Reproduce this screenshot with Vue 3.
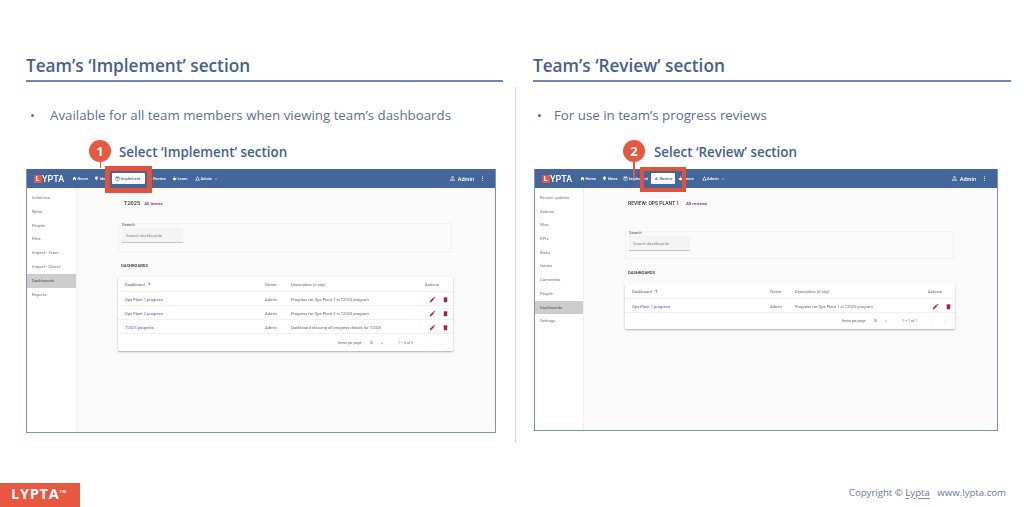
<script setup>
const icons = {
  home: 'M10 20v-6h4v6h5v-8h3L12 3 2 12h3v8z',
  idea: 'M9 21c0 .55.45 1 1 1h4c.55 0 1-.45 1-1v-1H9v1zm3-19C8.14 2 5 5.14 5 9c0 2.38 1.19 4.47 3 5.74V17c0 .55.45 1 1 1h6c.55 0 1-.45 1-1v-2.26c1.81-1.27 3-3.36 3-5.74 0-3.86-3.14-7-7-7z',
  event: 'M17 10H7v2h10v-2zm2-7h-1V1h-2v2H8V1H6v2H5c-1.11 0-1.99.9-1.99 2L3 19c0 1.1.89 2 2 2h14c1.1 0 2-.9 2-2V5c0-1.1-.9-2-2-2zm0 16H5V8h14v11zm-5-5H7v2h7v-2z',
  chart: 'M5 9.2h3V19H5zM10.6 5h2.8v14h-2.8zm5.6 8H19v6h-2.8z',
  learn: 'M12 2a3 3 0 1 1 0 6 3 3 0 0 1 0-6zM3 10h18c0 7-4 12-9 12S3 17 3 10z',
  team: 'M12 2a3.5 3.5 0 1 1 0 7 3.5 3.5 0 0 1 0-7zM6.5 11a3 3 0 1 1 0 6 3 3 0 0 1 0-6zM17.5 11a3 3 0 1 1 0 6 3 3 0 0 1 0-6zM1 22c0-2.5 2.5-4 5.5-4s5.5 1.5 5.5 4zM12 22c0-2.5 2.5-4 5.5-4s5.5 1.5 5.5 4z',
  admin: 'M12 5.9c1.16 0 2.1.94 2.1 2.1s-.94 2.1-2.1 2.1S9.9 9.16 9.9 8s.94-2.1 2.1-2.1m0 9c2.97 0 6.1 1.46 6.1 2.1v1.1H5.9V17c0-.64 3.13-2.1 6.1-2.1M12 4C9.79 4 8 5.79 8 8s1.79 4 4 4 4-1.79 4-4-1.79-4-4-4zm0 9c-2.67 0-8 1.34-8 4v3h16v-3c0-2.66-5.33-4-8-4z',
  more: 'M12 8c1.1 0 2-.9 2-2s-.9-2-2-2-2 .9-2 2 .9 2 2 2zm0 2c-1.1 0-2 .9-2 2s.9 2 2 2 2-.9 2-2-.9-2-2-2zm0 6c-1.1 0-2 .9-2 2s.9 2 2 2 2-.9 2-2-.9-2-2-2z',
  edit: 'M3 17.25V21h3.75L17.81 9.94l-3.75-3.75L3 17.25zM20.71 7.04c.39-.39.39-1.02 0-1.41l-2.34-2.34c-.39-.39-1.02-.39-1.41 0l-1.83 1.83 3.75 3.75 1.83-1.83z',
  del: 'M6 19c0 1.1.9 2 2 2h8c1.1 0 2-.9 2-2V7H6v12zM19 4h-3.5l-1-1h-5l-1 1H5v2h14V4z',
  up: 'M4 12l1.41 1.41L11 7.83V20h2V7.83l5.58 5.59L20 12l-8-8-8 8z'
}

const navItems = [
  { label: 'Home', icon: 'home' },
  { label: 'Ideas', icon: 'idea' },
  { label: 'Implement', icon: 'event' },
  { label: 'Review', icon: 'chart' },
  { label: 'Learn', icon: 'learn' },
  { label: 'Admin', icon: 'team', caret: true }
]

const sections = [
  {
    key: 'implement',
    title: 'Team’s ‘Implement’ section',
    bullet: 'Available for all team members when viewing team’s dashboards',
    step: '1',
    select: 'Select ‘Implement’ section',
    active: 'Implement',
    side: ['Initiatives', 'News', 'People', 'Files', 'Impact - Team', 'Impact - Charts', 'Dashboards', 'Reports'],
    heading: 'T2025',
    back: 'All teams',
    rows: [
      ['Ops Plant 1 progress', 'Admin', 'Progress for Ops Plant 1 in T2025 program'],
      ['Ops Plant 2 progress', 'Admin', 'Progress for Ops Plant 2 in T2025 program'],
      ['T2025 progress', 'Admin', 'Dashboard showing all progress details for T2025']
    ],
    range: '1 – 3 of 3'
  },
  {
    key: 'review',
    title: 'Team’s ‘Review’ section',
    bullet: 'For use in team’s progress reviews',
    step: '2',
    select: 'Select ‘Review’ section',
    active: 'Review',
    side: ['Review updates', 'Actions', 'Files', 'KPIs', 'Risks', 'Issues', 'Comments', 'People', 'Dashboards', 'Settings'],
    heading: 'REVIEW: OPS PLANT 1',
    back: 'All reviews',
    rows: [['Ops Plant 1 progress', 'Admin', 'Progress for Ops Plant 1 in T2025 program']],
    range: '1 – 1 of 1'
  }
]
</script>

<template>
  <div class="slide">
    <main class="columns">
      <template v-for="(s, i) in sections" :key="s.key">
        <div v-if="i === 1" class="divider"></div>
        <section class="col" :class="s.key">
          <h2 class="title">{{ s.title }}</h2>
          <ul class="bullets"><li>{{ s.bullet }}</li></ul>
          <h3 class="select">{{ s.select }}</h3>

          <div class="mock">
            <header class="bar">
              <div class="logo"><span class="logo-l">L</span>YPTA</div>
              <nav class="nav">
                <span v-for="n in navItems" :key="n.label" class="nav-item" :class="{ on: n.label === s.active }">
                  <svg viewBox="0 0 24 24"><path :d="icons[n.icon]" /></svg>
                  {{ n.label }}
                  <i v-if="n.caret" class="caret"></i>
                </span>
              </nav>
              <div class="user">
                <svg viewBox="0 0 24 24"><path :d="icons.admin" /></svg>
                <span>Admin</span>
                <svg class="more" viewBox="0 0 24 24"><path :d="icons.more" /></svg>
              </div>
            </header>
            <div class="body">
              <aside class="side">
                <div v-for="t in s.side" :key="t" class="side-item" :class="{ on: t === 'Dashboards' }">{{ t }}</div>
              </aside>
              <div class="content">
                <div class="head"><b>{{ s.heading }}</b><a>{{ s.back }}</a></div>
                <div class="search">
                  <label>Search</label>
                  <div class="input">Search dashboards</div>
                </div>
                <div class="dash">DASHBOARDS</div>
                <div class="table">
                  <div class="row th">
                    <span class="c1">Dashboard <svg viewBox="0 0 24 24"><path :d="icons.up" /></svg></span>
                    <span class="c2">Owner</span>
                    <span class="c3">Description (if any)</span>
                    <span class="c4">Actions</span>
                  </div>
                  <div v-for="r in s.rows" :key="r[0]" class="row td">
                    <span class="c1 link">{{ r[0] }}</span>
                    <span class="c2">{{ r[1] }}</span>
                    <span class="c3">{{ r[2] }}</span>
                    <span class="c4 acts">
                      <svg viewBox="0 0 24 24"><path class="pink" :d="icons.edit" /></svg>
                      <svg viewBox="0 0 24 24"><path class="red" :d="icons.del" /></svg>
                    </span>
                  </div>
                  <div class="pager">
                    <span>Items per page:</span>
                    <span class="size">10</span>
                    <i class="pcaret"></i>
                    <span class="range">{{ s.range }}</span>
                    <span class="chev">‹</span>
                    <span class="chev">›</span>
                  </div>
                </div>
              </div>
            </div>
          </div>

          <div class="callout">
            <div class="badge">{{ s.step }}</div>
            <div class="stem"></div>
            <div class="box"></div>
          </div>
        </section>
      </template>
    </main>
    <footer class="foot">
      <div class="brand">LYPTA<sup>TM</sup></div>
      <div class="copy">Copyright © <u>Lypta</u> &nbsp; www.lypta.com</div>
    </footer>
  </div>
</template>

<style>
html, body { margin: 0; background: #fff; }
</style>

<style scoped>
.slide {
  width: 1024px;
  height: 507px;
  display: flex;
  flex-direction: column;
  overflow: hidden;
  background: #fff;
  font-family: "Open Sans", "Noto Sans", sans-serif;
}
.columns {
  flex: 1;
  display: grid;
  grid-template-columns: 477px 30px 478px;
  padding-left: 26px;
}
.divider {
  width: 1px;
  height: 356px;
  margin: 87px 0 0 -6px;
  background: #d9d9d9;
  justify-self: center;
}
.col { position: relative; padding-top: 54px; min-width: 0; }
.title {
  margin: 0;
  height: 26px;
  line-height: 24px;
  font-size: 17.2px;
  font-weight: 600;
  color: #44618f;
  border-bottom: 2px solid #7088ad;
  box-sizing: content-box;
}
.bullets {
  list-style: none;
  margin: 23px 0 0;
  padding: 0;
  height: 20px;
  line-height: 20px;
  font-size: 13.3px;
  color: #5a7096;
}
.bullets li { position: relative; padding-left: 24px; }
.bullets li::before {
  content: "";
  position: absolute;
  left: 5px;
  top: 9px;
  width: 3px;
  height: 3px;
  border-radius: 50%;
  background: #5a7096;
}
.review .bullets li { padding-left: 21px; }
.select {
  margin: 18px 0 0 93px;
  height: 18px;
  line-height: 18px;
  font-size: 13.4px;
  font-weight: 600;
  color: #44618f;
}
.review .select { margin-left: 121px; }

.mock {
  margin-top: 8px;
  width: 470px;
  height: 264px;
  box-sizing: border-box;
  border: 1px solid #7f93b5;
  border-top: 0;
  display: flex;
  flex-direction: column;
  filter: blur(0.3px);
}
.review .mock { width: 464px; margin-left: 1px; height: 262px; }
.bar {
  height: 19px;
  flex: none;
  background: #44669a;
  color: #fff;
  display: flex;
  align-items: center;
  padding: 0 9px 0 7px;
  font-size: 4px;
  font-family: Roboto, sans-serif;
  font-weight: 500;
}
.logo {
  width: 35px;
  font-size: 9px;
  font-weight: 500;
  display: flex;
  align-items: center;
}
.logo-l {
  width: 7.5px;
  height: 8px;
  line-height: 8px;
  background: #e8573f;
  text-align: center;
  font-size: 7px;
  font-weight: 700;
  margin-right: 0.5px;
}
.nav { display: flex; align-items: center; }
.nav-item {
  display: flex;
  align-items: center;
  gap: 0.5px;
  height: 11px;
  padding: 0 3px;
  white-space: nowrap;
}
.nav-item:last-child { margin-left: 1.5px; }
.nav-item svg { width: 5px; height: 5px; fill: #fff; }
.nav-item.on { background: #fff; color: #44669a; border-radius: 1px; }
.nav-item.on svg { fill: #44669a; }
.implement .nav-item.on { padding-right: 4.5px; }
.caret {
  margin-left: 2.5px;
  border: 1.3px solid transparent;
  border-top-color: #fff;
  transform: translateY(0.8px);
}
.user {
  margin-left: auto;
  display: flex;
  align-items: center;
  gap: 2px;
  font-size: 5.6px;
}
.user svg { width: 7px; height: 7px; fill: #fff; }
.user .more { margin-left: 3px; }
.body { flex: 1; display: flex; min-height: 0; font-family: Roboto, sans-serif; }
.side {
  width: 49px;
  flex: none;
  background: #fff;
  border-right: 1px solid #f0f0f0;
  padding-top: 3px;
  color: #767680;
  font-size: 4.2px;
}
.review .side { width: 48px; }
.side-item {
  height: 13.8px;
  line-height: 13.8px;
  padding-left: 5px;
}
.side-item.on { background: #cdcdcd; color: #55555f; }
.review .side-item { height: 13.7px; line-height: 13.7px; }
.content { flex: 1; min-width: 0; background: #fafafa; padding: 11px 43px 0 41px; color: #444; }
.head {
  display: flex;
  align-items: baseline;
  gap: 4px;
  height: 12px;
  box-sizing: border-box;
  padding: 1px 0 0 6px;
  line-height: 6px;
}
.head b { font-weight: 500; font-size: 5.6px; color: #333; }
.head a { font-size: 4.4px; font-weight: 500; color: #7a2a8a; }
.review .head { padding-left: 3px; gap: 7px; }
.review .head b { font-size: 5px; }
.search {
  margin-top: 12px;
  height: 29px;
  box-sizing: border-box;
  border: 1px solid #f2f2f2;
  padding: 0 0 0 3px;
  font-size: 4.2px;
  color: #555;
}
.review .search { margin-top: 20px; height: 28px; }
.search label { display: block; height: 6px; line-height: 6px; margin-top: -2px; }
.input {
  width: 61px;
  height: 15px;
  line-height: 15px;
  box-sizing: border-box;
  background: #f4f4f4;
  border-bottom: 1px solid #c4c4c4;
  padding-left: 4px;
  color: #8a8a8a;
}
.dash { margin: 11px 0 0 3px; height: 14px; line-height: 6px; font-size: 4.2px; font-weight: 500; color: #333; }
.table {
  width: 335px;
  background: #fff;
  box-shadow: 0 1px 2px rgba(0, 0, 0, 0.3);
  border-radius: 1px;
  font-size: 4.1px;
  color: #666;
}
.review .table { width: 330px; }
.row {
  display: grid;
  grid-template-columns: 140px 26px 134px 1fr;
  align-items: center;
  height: 14px;
  padding-left: 7px;
  padding-top: 1px;
  border-bottom: 1px solid #f0f0f0;
  box-sizing: border-box;
}
.review .row { grid-template-columns: 138px 25px 133px 1fr; }
.th { height: 15px; padding-top: 0; }
.c1 { display: flex; align-items: center; gap: 2px; }
.c1 svg { width: 4.5px; height: 4.5px; fill: #555; }
.link { color: #5a55d6; }
.acts { display: flex; align-items: center; gap: 6.5px; padding-left: 3.5px; }
.acts svg { width: 7px; height: 7px; }
.pink { fill: #bf1d5c; }
.red { fill: #ab1f2e; }
.pager {
  display: flex;
  align-items: center;
  height: 17px;
  padding-left: 220px;
  font-size: 3.5px;
  color: #666;
}
.review .pager { height: 16px; padding-left: 217px; }
.size { margin-left: 7px; }
.pcaret { margin-left: 8px; border: 1.3px solid transparent; border-top-color: #666; transform: translateY(0.8px); }
.range { margin-left: 15px; }
.chev { margin-left: 14px; color: #ccc; font-size: 5px; }
.chev + .chev { margin-left: 11px; }

.callout { position: absolute; left: 0; top: 0; width: 100%; height: 100%; pointer-events: none; }
.badge {
  position: absolute;
  left: 63px;
  top: 140px;
  width: 22px;
  height: 22px;
  line-height: 22px;
  border-radius: 50%;
  background: #e8573f;
  color: #fff;
  text-align: center;
  font-size: 13px;
  font-weight: 700;
}
.stem {
  position: absolute;
  left: 73.5px;
  top: 160px;
  width: 1.5px;
  height: 8px;
  background: #e8573f;
}
.box {
  position: absolute;
  left: 79px;
  top: 166px;
  width: 47px;
  height: 27px;
  box-sizing: border-box;
  border: 5px solid #e0533a;
}
.review .badge { left: 90px; }
.review .stem { left: 100px; height: 18px; }
.review .box { left: 107px; top: 167px; width: 46px; height: 25px; border-width: 4.5px; }

.foot {
  height: 24px;
  flex: none;
  display: flex;
  align-items: center;
  justify-content: space-between;
  padding-right: 18px;
}
.brand {
  width: 80px;
  height: 24px;
  box-sizing: border-box;
  padding-left: 11px;
  line-height: 21px;
  background: #e8573f;
  color: #fff;
  font-size: 14.6px;
  font-weight: 700;
  letter-spacing: 0.7px;
  white-space: nowrap;
}
.brand sup { font-size: 4px; vertical-align: 6px; line-height: 0; }
.copy {
  font-size: 9.65px;
  color: #66779b;
  margin-top: -6px;
}
.copy u { text-decoration: underline #d9736f 0.7px; text-underline-offset: 1.5px; }
</style>
